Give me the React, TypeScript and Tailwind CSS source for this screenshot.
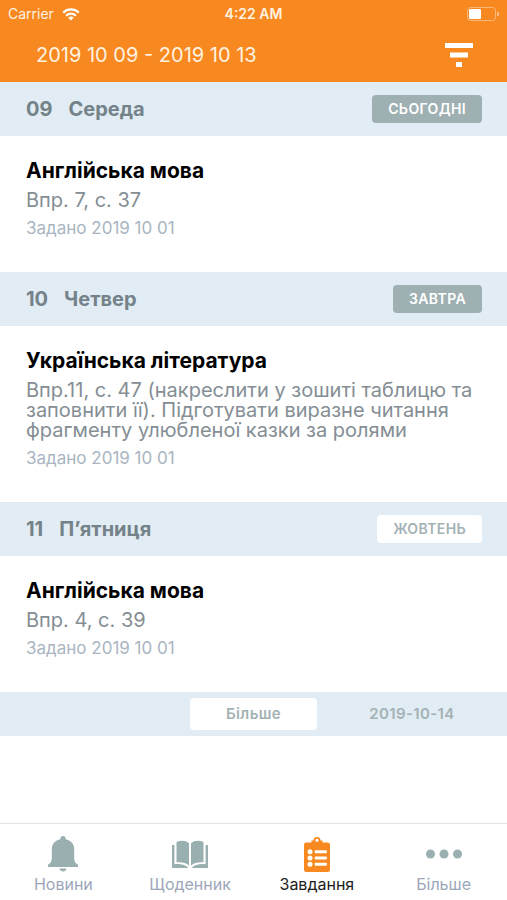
import type { ReactNode } from "react";

type Day = {
  day: string;
  weekday: string;
  badge: string;
  muted?: boolean;
  subject: string;
  task: string;
  assigned: string;
};

const days: Day[] = [
  {
    day: "09",
    weekday: "Середа",
    badge: "СЬОГОДНІ",
    subject: "Англійська мова",
    task: "Впр. 7, с. 37",
    assigned: "Задано 2019 10 01",
  },
  {
    day: "10",
    weekday: "Четвер",
    badge: "ЗАВТРА",
    subject: "Українська література",
    task: "Впр.11, с. 47 (накреслити у зошиті таблицю та заповнити її). Підготувати виразне читання фрагменту улюбленої казки за ролями",
    assigned: "Задано 2019 10 01",
  },
  {
    day: "11",
    weekday: "П’ятниця",
    badge: "ЖОВТЕНЬ",
    muted: true,
    subject: "Англійська мова",
    task: "Впр. 4, с. 39",
    assigned: "Задано 2019 10 01",
  },
];

const WifiIcon = () => (
  <svg viewBox="0 0 18 13" className="w-[18px] h-[13px]" fill="none" stroke="#fff" strokeWidth="2.2">
    <path d="M1.2 4.6a11.2 11.2 0 0 1 15.6 0" />
    <path d="M4.1 7.7a7 7 0 0 1 9.8 0" />
    <path d="M9 12.6 6.2 9.8a4 4 0 0 1 5.6 0Z" fill="#fff" stroke="none" />
  </svg>
);

const BatteryIcon = () => (
  <svg viewBox="0 0 32 14" className="w-8 h-3.5">
    <rect x="0.5" y="0.5" width="28" height="13" rx="3" fill="none" stroke="#fff" strokeOpacity="0.4" />
    <rect x="2" y="2" width="12" height="10" rx="1" fill="#fff" />
    <path d="M30 5a2.2 2.2 0 0 1 0 4.4Z" fill="#fff" fillOpacity="0.5" />
  </svg>
);

const FilterIcon = () => (
  <svg viewBox="0 0 28 24" className="w-7 h-6" fill="#fff">
    <rect width="28" height="5" />
    <rect x="5" y="9.5" width="18" height="5" />
    <rect x="11" y="19" width="6" height="5" />
  </svg>
);

const BellIcon = () => (
  <svg viewBox="0 0 32 36" className="w-8 h-9" fill="#9aafaf">
    <path d="M16 0a2.6 2.6 0 0 0-2.6 2.600v.6C8.300 4.300 4.800 7.600 4.800 13v9.500c0 3-1.300 4.600-3.800 6.300V31h30v-2.200c-2.500-1.700-3.800-3.300-3.800-6.300V13c0-5.400-3.500-8.700-8.600-9.800v-.6A2.600 2.600 0 0 0 16 0Z" />
    <path d="M12.500 32.500h7c-.4 1.800-1.700 3-3.500 3s-3.100-1.200-3.500-3Z" />
  </svg>
);

const BookIcon = () => (
  <svg viewBox="0 0 38 28" className="w-[38px] h-7" fill="#9aafaf">
    <path d="M5.500 2C10 .1 15 .2 18 3.300V25.500c-3-2.800-7.500-3.700-12.500-3.200Z" />
    <path d="M32.500 2C28 .1 23 .2 20 3.300V25.500c3-2.800 7.500-3.700 12.500-3.200Z" />
    <path d="M1 5h2.400v19.300c5.200-.7 9.600 0 13.300 2.700v1H1Z" />
    <path d="M37 5h-2.400v19.300c-5.200-.7-9.600 0-13.300 2.700v1H37Z" />
  </svg>
);

const ClipboardIcon = () => (
  <svg viewBox="0 0 26 36" className="w-[26px] h-9">
    <path
      fillRule="evenodd"
      fill="#f88820"
      d="M7.500 6.500V4.500h2a3.500 3.500 0 0 1 7 0h2v2h5A2.500 2.500 0 0 1 26 9v24.500a2.500 2.500 0 0 1-2.500 2.500h-21A2.500 2.500 0 0 1 0 33.500V9a2.500 2.500 0 0 1 2.500-2.500ZM13 2.700a1.600 1.600 0 1 0 0 3.200 1.600 1.600 0 0 0 0-3.200Z"
    />
    <g fill="#fff">
      <circle cx="6" cy="15.800" r="2.500" />
      <circle cx="6" cy="22" r="2.500" />
      <circle cx="6" cy="28.200" r="2.500" />
      <rect x="10.800" y="14.300" width="12" height="3" rx="0.5" />
      <rect x="10.800" y="20.500" width="12" height="3" rx="0.5" />
      <rect x="10.800" y="26.700" width="12" height="3" rx="0.5" />
    </g>
  </svg>
);

const DotsIcon = () => (
  <svg viewBox="0 0 36 10" className="w-9 h-2.5" fill="#9aafaf">
    <circle cx="4.5" cy="5" r="4.5" />
    <circle cx="18" cy="5" r="4.5" />
    <circle cx="31.5" cy="5" r="4.5" />
  </svg>
);

const Tab = ({ label, active, children }: { label: string; active?: boolean; children: ReactNode }) => (
  <a href="#" className="flex-1 flex flex-col items-center pt-3">
    <span className="h-9 flex items-center">{children}</span>
    <span className={active ? "text-base leading-6 text-[#1c1c1c]" : "text-base leading-6 text-[#9ca6b9]"}>
      {label}
    </span>
  </a>
);

const App = () => {
  return (
    <div className="min-h-screen flex flex-col bg-white font-['Inter','Liberation_Sans',sans-serif]">
      <header className="bg-[#f88820] text-[#fff3e0]">
        <div className="grid grid-cols-3 items-center h-7 px-2 text-sm">
          <div className="flex items-center gap-2">
            <span>Carrier</span>
            <WifiIcon />
          </div>
          <span className="text-center font-semibold">4:22 AM</span>
          <div className="flex justify-end">
            <BatteryIcon />
          </div>
        </div>
        <div className="flex justify-between items-center h-[54px] pl-9 pr-[34px]">
          <h1 className="text-xl">2019 10 09 - 2019 10 13</h1>
          <button type="button" aria-label="Фільтр">
            <FilterIcon />
          </button>
        </div>
      </header>

      <main className="flex-1">
        {days.map((d) => (
          <section key={d.day}>
            <div className="flex justify-between items-center h-[54px] pl-[26px] pr-[25px] bg-[#e2ecf4]">
              <h2 className="flex gap-4 text-xl font-bold text-[#748289]">
                <span>{d.day}</span>
                <span>{d.weekday}</span>
              </h2>
              <span
                className={
                  d.muted
                    ? "rounded-sm px-4 text-sm leading-7 font-semibold tracking-wide bg-white text-[#a3b2b5]"
                    : "rounded-sm px-4 text-sm leading-7 font-semibold tracking-wide bg-[#9fb0b3] text-white"
                }
              >
                {d.badge}
              </span>
            </div>
            <div className="pt-[23px] pb-[34px] px-[26px]">
              <h3 className="text-[21px] leading-6 font-bold text-black">{d.subject}</h3>
              <p className="mt-[7px] text-xl leading-5 text-[#848e94]">{d.task}</p>
              <p className="mt-2 text-[17px] leading-5 text-[#a9b5c1]">{d.assigned}</p>
            </div>
          </section>
        ))}

        <div className="grid grid-cols-[3fr_2fr_3fr] items-center h-11 bg-[#e2ecf4] text-[15px] font-semibold tracking-wide text-[#a3b2b5]">
          <button type="button" className="col-start-2 h-8 rounded-sm bg-white">
            Більше
          </button>
          <span className="text-center">2019-10-14</span>
        </div>
      </main>

      <nav className="flex h-[77px] border-t border-[#e3e4e6]">
        <Tab label="Новини">
          <BellIcon />
        </Tab>
        <Tab label="Щоденник">
          <BookIcon />
        </Tab>
        <Tab label="Завдання" active>
          <ClipboardIcon />
        </Tab>
        <Tab label="Більше">
          <DotsIcon />
        </Tab>
      </nav>
    </div>
  );
};

export default App;
